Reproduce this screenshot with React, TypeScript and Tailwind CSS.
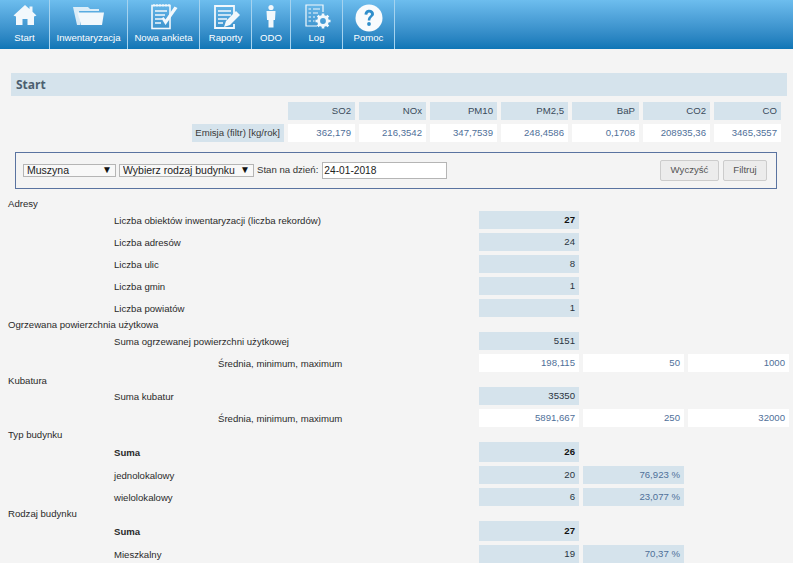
import React from "react";

const Ico = ({ w, children }: { w: number; children: React.ReactNode }) => (
  <svg width={w} height="30" viewBox={`0 0 ${w} 30`} className="block">{children}</svg>
);

const W = "#f2f8fc";

const icons: Record<string, React.ReactNode> = {
  home: (
    <Ico w={24}>
      <path
        fillRule="evenodd"
        d="M12 2 L16.5 6 V3.5 H19.5 V8.7 L23.5 12.5 L21 13.5 V22 H14.5 V16 H9.5 V22 H3 V13.5 L0.5 12.5 Z"
        fill={W}
      />
    </Ico>
  ),
  folder: (
    <Ico w={33}>
      <path d="M1 4 H16 L18 6 H27 V8 H7 L8.5 22 H5 Z" fill={W} opacity="0.85" />
      <path d="M5.5 9.5 H32 L30 22 H9 Z" fill={W} />
    </Ico>
  ),
  survey: (
    <Ico w={28}>
      <rect x="2" y="2.5" width="18" height="23" fill="none" stroke={W} strokeWidth="1.6" />
      <path d="M4 1 V3.5 M7 1 V3.5 M10 1 V3.5 M13 1 V3.5 M16 1 V3.5 M19 1 V3.5" stroke={W} strokeWidth="1.2" />
      <path d="M5 8 H17 M5 12 H15 M5 16 H12 M5 20 H11" stroke={W} strokeWidth="1.4" />
      <path d="M11.5 15.5 L15.5 22 L27.5 5 L24.5 3.5 L15.5 16.5 L13.5 14 Z" fill={W} />
    </Ico>
  ),
  report: (
    <Ico w={28}>
      <path d="M21 11 V3 H2 V25 H21 V21" fill="none" stroke={W} strokeWidth="1.8" />
      <path d="M5 8 H18 M5 12 H18 M5 16 H14 M5 20 H10" stroke={W} strokeWidth="1.5" />
      <path d="M11 24 L13 18 L23 8 L27 12 L17 22 Z" fill={W} />
    </Ico>
  ),
  person: (
    <Ico w={12}>
      <circle cx="6" cy="4.5" r="2.6" fill={W} />
      <path d="M1.5 8 H10.5 L10 17 H8.5 V24.5 H3.5 V17 H2 Z" fill={W} />
    </Ico>
  ),
  log: (
    <Ico w={27}>
      <path d="M13 23 H2 V2 H19 V9" fill="none" stroke={W} strokeWidth="1.2" />
      <path d="M4.5 6 H7 M9 6 H16 M4.5 10 H7 M9 10 H14 M4.5 14 H7 M9 14 H11 M4.5 18 H7 M9 18 H10.5" stroke={W} strokeWidth="1.2" />
      <circle cx="19" cy="18" r="4.4" fill="none" stroke={W} strokeWidth="3" />
      <path d="M19 10.5 V13 M19 23 V25.5 M11.5 18 H14 M24 18 H26.5 M13.7 12.7 L15.5 14.5 M22.5 21.5 L24.3 23.3 M24.3 12.7 L22.5 14.5 M15.5 21.5 L13.7 23.3" stroke={W} strokeWidth="2.6" />
    </Ico>
  ),
  help: (
    <Ico w={28}>
      <circle cx="14" cy="15" r="13.5" fill="#f8fbfd" />
      <path d="M9.5 11.5 C9.8 8 12 6.8 14.3 6.8 C17 6.8 19 8.6 19 11 C19 13.6 15.3 14.2 15.3 17.5 H12.8 C12.8 13 16 13 16 11.2 C16 10.2 15.3 9.4 14.2 9.4 C13 9.4 12.4 10.3 12.3 11.8 Z" fill="#2f8ecb" />
      <circle cx="14" cy="21" r="1.9" fill="#2f8ecb" />
    </Ico>
  ),
};

const nav = [
  { label: "Start", icon: "home", w: "w-[50px]", m: "" },
  { label: "Inwentaryzacja", icon: "folder", w: "w-[78px]", m: "" },
  { label: "Nowa ankieta", icon: "survey", w: "w-[72px]", m: "ml-[1px]" },
  { label: "Raporty", icon: "report", w: "w-[52px]", m: "ml-[2px]" },
  { label: "ODO", icon: "person", w: "w-[39px]", m: "" },
  { label: "Log", icon: "log", w: "w-[52px]", m: "ml-[2px]" },
  { label: "Pomoc", icon: "help", w: "w-[52px]", m: "" },
];

const emis = [
  ["SO2", "362,179"],
  ["NOx", "216,3542"],
  ["PM10", "347,7539"],
  ["PM2,5", "248,4586"],
  ["BaP", "0,1708"],
  ["CO2", "208935,36"],
  ["CO", "3465,3557"],
];

const Cell = ({ children, tone = "blue", color = "text-[#2a3440]", w = "w-[100px]", h = "h-[18px]", bold = false }: any) => (
  <div
    className={`${w} ${h} ${tone === "blue" ? "bg-[#d5e3ec]" : "bg-white"} ${color} ${bold ? "font-bold" : ""} flex items-center justify-end pr-[4px]`}
  >
    {children}
  </div>
);

const Heading = ({ children, mt }: { children: React.ReactNode; mt: string }) => (
  <div className={`pl-[8px] pt-[1px] h-[10px] leading-[10px] text-[#2a2a2a] ${mt}`}>{children}</div>
);

const Row = ({ label, pl = "pl-[114px]", tall = false, bold = false, mt = "mt-[4px]", children }: any) => (
  <div className={`flex ${mt} ${tall ? "h-[20px]" : "h-[18px]"} items-center`}>
    <div className={`w-[479px] shrink-0 pt-[2px] ${pl} text-[#2a2a2a] ${bold ? "font-bold" : ""}`}>{label}</div>
    <div className="flex gap-[4px]">{children}</div>
  </div>
);

const Third = ({ children }: any) => <Cell w="w-[101px]" tone="white" color="text-[#4f7099]">{children}</Cell>;
const Pct = ({ children }: any) => <Cell w="w-[101px]" color="text-[#4f7099]">{children}</Cell>;

const Sel = ({ w, text }: { w: string; text: string }) => (
  <div className={`relative ${w} h-[13px]`}>
    <select className="w-full h-full appearance-none bg-[#f8f8f8] border border-[#b5b5b5] pl-[3px] text-[10.5px] leading-[11px] text-[#222] outline-none">
      <option>{text}</option>
    </select>
    <span className="absolute right-[4px] top-[0px] text-[10px] leading-[11px] text-[#111] pointer-events-none">▼</span>
  </div>
);

export default function App() {
  return (
    <div className="w-[793px] h-[563px] overflow-hidden bg-[#f4f4f4] text-[9.6px] font-['Liberation_Sans',Arial,sans-serif]">
      <header className="h-[49px] flex bg-gradient-to-b from-[#6dbdee] to-[#0e76b6]">
        {nav.map((n) => (
          <div key={n.label} className={`${n.w} h-full shrink-0 border-r border-[#a5d3ef] flex flex-col items-center text-white`}>
            <div className={`h-[32px] pt-[3px] flex justify-center ${n.m}`}>{icons[n.icon]}</div>
            <div className="text-[9.6px] leading-[11px] whitespace-nowrap">{n.label}</div>
          </div>
        ))}
      </header>

      <div className="mt-[24px] ml-[11px] w-[776px] h-[23px] bg-[#d5e3ec] pl-[5px] flex items-center text-[12px] font-bold text-[#4c5f70] font-['Open_Sans',sans-serif]">
        Start
      </div>

      <div className="mt-[6px] flex flex-col gap-[4px] pl-[192px]">
        <div className="flex gap-[4px] h-[18px]">
          <div className="w-[92px]" />
          {emis.map((e) => (
            <Cell key={e[0]} w="w-[67px]" color="text-[#3a4a5a]">{e[0]}</Cell>
          ))}
        </div>
        <div className="flex gap-[4px] h-[18px]">
          <div className="w-[92px] bg-[#d5e3ec] flex items-center justify-end pr-[4px] text-[#3a3a3a] whitespace-nowrap">Emisja (filtr) [kg/rok]</div>
          {emis.map((e) => (
            <Cell key={e[0]} w="w-[67px]" tone="white" color="text-[#4f7099]">{e[1]}</Cell>
          ))}
        </div>
      </div>

      <div className="mt-[10px] ml-[15px] w-[762px] h-[37px] border border-[#5a73a0] flex items-center pl-[7px] pr-[9px] gap-[3px]">
        <Sel w="w-[93px]" text="Muszyna" />
        <Sel w="w-[135px]" text="Wybierz rodzaj budynku" />
        <span className="text-[#333]">Stan na dzień:</span>
        <input
          readOnly
          value="24-01-2018"
          className="w-[125px] h-[17px] ml-[1px] bg-white border border-[#b5b5b5] pl-[1px] text-[10.2px] text-[#222] outline-none"
        />
        <div className="ml-auto flex gap-[4px]">
          <button className="w-[59px] h-[21px] border border-[#ccc] rounded-[2px] bg-[#ececec] text-[#555] text-[9.6px]">Wyczyść</button>
          <button className="w-[44px] h-[21px] border border-[#ccc] rounded-[2px] bg-[#ececec] text-[#555] text-[9.6px]">Filtruj</button>
        </div>
      </div>

      <Heading mt="mt-[9px]">Adresy</Heading>
      <Row label="Liczba obiektów inwentaryzacji (liczba rekordów)" mt="mt-[3px]"><Cell bold color="text-[#111]">27</Cell></Row>
      <Row label="Liczba adresów"><Cell>24</Cell></Row>
      <Row label="Liczba ulic"><Cell>8</Cell></Row>
      <Row label="Liczba gmin"><Cell>1</Cell></Row>
      <Row label="Liczba powiatów"><Cell>1</Cell></Row>

      <Heading mt="mt-[2px]">Ogrzewana powierzchnia użytkowa</Heading>
      <Row label="Suma ogrzewanej powierzchni użytkowej" mt="mt-[3px]"><Cell>5151</Cell></Row>
      <Row label="Średnia, minimum, maximum" pl="pl-[218px]">
        <Cell tone="white" color="text-[#4f7099]">198,115</Cell>
        <Third>50</Third>
        <Third>1000</Third>
      </Row>

      <Heading mt="mt-[3px]">Kubatura</Heading>
      <Row label="Suma kubatur" mt="mt-[2px]"><Cell>35350</Cell></Row>
      <Row label="Średnia, minimum, maximum" pl="pl-[218px]">
        <Cell tone="white" color="text-[#4f7099]">5891,667</Cell>
        <Third>250</Third>
        <Third>32000</Third>
      </Row>

      <Heading mt="mt-[2px]">Typ budynku</Heading>
      <Row label="Suma" bold tall mt="mt-[3px]"><Cell bold h="h-[20px]" color="text-[#111]">26</Cell></Row>
      <Row label="jednolokalowy"><Cell>20</Cell><Pct>76,923 %</Pct></Row>
      <Row label="wielolokalowy"><Cell>6</Cell><Pct>23,077 %</Pct></Row>

      <Heading mt="mt-[2px]">Rodzaj budynku</Heading>
      <Row label="Suma" bold tall mt="mt-[3px]"><Cell bold h="h-[20px]" color="text-[#111]">27</Cell></Row>
      <Row label="Mieszkalny"><Cell>19</Cell><Pct>70,37 %</Pct></Row>
    </div>
  );
}
